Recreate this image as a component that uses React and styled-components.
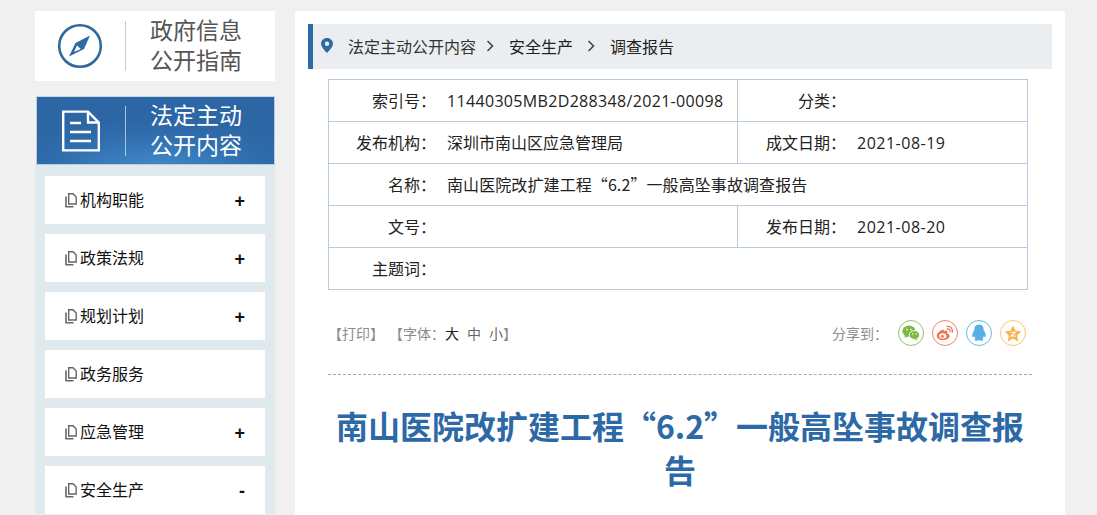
import React from 'react'
import styled, { createGlobalStyle } from 'styled-components'

const Global = createGlobalStyle`
  html, body { margin: 0; padding: 0; background: #f0f0f0; height: 515px; overflow: hidden; }
  body { font-family: "Open Sans", "Noto Sans CJK SC", sans-serif; }
  * { box-sizing: border-box; }
`

const Page = styled.div`
  display: flex;
  gap: 20px;
  width: 1097px;
  height: 515px;
  padding: 11px 0 0 35px;
  overflow: hidden;
`
const Side = styled.div`
  width: 240px;
  flex: none;
`
const GuideCard = styled.div`
  height: 70px;
  background: #fff;
  display: flex;
  align-items: center;
`
const IconSlot = styled.div`
  width: 91px;
  height: 50px;
  display: flex;
  align-items: center;
  justify-content: center;
  border-right: 1px solid ${p => p.$line};
`
const BigLabel = styled.div`
  margin: 0 0 2px 24px;
  font-size: 23px;
  line-height: 30px;
  color: ${p => p.$color};
`
const SideHead = styled.div`
  height: 69px;
  margin: 15px 0 0 1px;
  background: radial-gradient(ellipse 150px 45px at 50% 100%, #3f86c8 0%, #2f6cab 70%, #2c66a5 100%);
  border: 1px solid #b9cfdf;
  border-top-color: #c5d6e3;
  display: flex;
  align-items: center;
`
const HeadSlot = styled(IconSlot)`
  width: 89px;
`
const Menu = styled.div`
  padding: 11px 10px 0;
  background: #dfe9ee;
  display: flex;
  flex-direction: column;
  gap: 10px;
`
const MenuItem = styled.div`
  height: 48px;
  flex: none;
  background: #fff;
  display: flex;
  align-items: center;
  padding: 0 20px 2px;
  font-size: 16px;
  color: #111;
`
const MenuText = styled.span`
  margin-left: 3px;
  flex: 1;
`
const Mark = styled.span`
  margin-top: 4px;
  font-size: 18px;
  font-weight: 700;
  color: #111;
  font-family: "Liberation Sans", sans-serif;
`
const SmallDocIcon = styled.svg`
  width: 12px;
  height: 15px;
  margin-top: 2px;
  flex: none;
`
const Main = styled.div`
  width: 770px;
  height: 504px;
  flex: none;
  background: #fff;
  padding: 13px 13px 0;
`
const Crumbs = styled.div`
  height: 45px;
  background: #ebeef1;
  border-left: 5px solid #2b6ca6;
  display: flex;
  align-items: center;
  padding: 0 0 2px 8px;
  font-size: 16px;
  color: #333;
`
const CrumbText = styled.span`
  margin-left: ${p => p.$gap}px;
  color: ${p => p.$color || '#333'};
`
const Chevron = styled.svg`
  margin-left: ${p => p.$gap}px;
  width: 8px;
  height: 12px;
`
const InfoTable = styled.div`
  margin: 10px 0 0 20px;
  width: 700px;
  border: 1px solid #b7cbdd;
  border-bottom: 0;
`
const Row = styled.div`
  height: 42px;
  display: flex;
  border-bottom: 1px solid #b7cbdd;
  font-size: 16px;
  color: #222;
`
const Label = styled.div`
  width: ${p => p.$w}px;
  flex: none;
  text-align: right;
  line-height: 42px;
`
const Value = styled.div`
  flex: ${p => (p.$w ? 'none' : 1)};
  width: ${p => (p.$w ? p.$w + 'px' : 'auto')};
  padding-left: 11px;
  line-height: 42px;
  white-space: nowrap;
  border-right: ${p => (p.$w ? '1px solid #b7cbdd' : '0')};
`
const TitleValue = styled(Value)`
  font-family: "Noto Sans CJK SC", sans-serif;
  letter-spacing: 0.09px;
  line-height: 41px;
`
const Digits = styled.span`
  letter-spacing: ${p => p.$track}px;
`
const Tools = styled.div`
  margin: 28px 0 0 20px;
  width: 698px;
  height: 30px;
  display: flex;
  align-items: center;
  font-size: 14px;
  color: #8c8c8c;
`
const FontSize = styled.span`
  color: ${p => p.$color};
  margin-left: ${p => p.$gap}px;
`
const ShareLabel = styled.span`
  margin-left: auto;
  margin-right: 10px;
`
const ShareList = styled.div`
  display: flex;
  gap: 8px;
`
const ShareIcon = styled.div`
  width: 26px;
  height: 26px;
  border-radius: 50%;
  border: 1px solid ${p => p.$color};
  display: flex;
  align-items: center;
  justify-content: center;
`
const Divider = styled.div`
  margin: 26px 0 0 20px;
  width: 704px;
  border-top: 1px dashed #aaa;
`
const Title = styled.h1`
  margin: 28px 0 0 20px;
  width: 704px;
  text-align: center;
  font-family: "Noto Sans CJK SC", sans-serif;
  font-size: 32px;
  line-height: 44px;
  font-weight: 700;
  color: #2d69a6;
`

const Compass = () => (
  <svg width="46" height="46" viewBox="0 0 46 46">
    <circle cx="23" cy="23" r="20.8" fill="none" stroke="#2f6a9f" strokeWidth="2.6" />
    <path d="M33 12.5 L18.5 20 L12 33.5 L27 26 Z" fill="#2f6a9f" />
    <path d="M20 22.4 L23.8 26 L17 29 Z" fill="#fff" />
  </svg>
)

const DocBig = () => (
  <svg width="38" height="42" viewBox="0 0 38 42" fill="none" stroke="#fff" strokeWidth="2.4">
    <path d="M1.2 1.6 H26 L36.8 12.5 V40.4 H1.2 Z" />
    <path d="M26 1.6 V12.5 H36.8" />
    <path d="M8 13 H19 M8 22 H29 M8 31 H29" />
  </svg>
)

const DocSmall = () => (
  <SmallDocIcon viewBox="0 0 12 15" fill="none" stroke="#666" strokeWidth="1.4">
    <path d="M3.7 0.8 H8 L11.2 4 V11 H3.7 Z" />
    <path d="M1 3.5 V13.7 H8.5" strokeWidth="1.6" />
  </SmallDocIcon>
)

const Pin = () => (
  <svg width="12" height="15" viewBox="0 0 12 15">
    <path fillRule="evenodd" fill="#2f6a9f" d="M6 0 C2.6 0 0 2.6 0 5.8 C0 9.6 6 15 6 15 C6 15 12 9.6 12 5.8 C12 2.6 9.4 0 6 0 Z M6 3.6 A2.2 2.2 0 1 1 6 8 A2.2 2.2 0 1 1 6 3.6 Z" />
  </svg>
)

const Arrow = ({ gap }) => (
  <Chevron $gap={gap} viewBox="0 0 8 12">
    <path d="M1.5 1 L6.5 6 L1.5 11" fill="none" stroke="#444" strokeWidth="1.6" />
  </Chevron>
)

const Wechat = () => (
  <svg width="18" height="16" viewBox="0 0 18 16">
    <ellipse cx="7" cy="6.2" rx="6.6" ry="5.6" fill="#7cbb3f" />
    <path d="M3 10 L2.6 13 L6 11 Z" fill="#7cbb3f" />
    <ellipse cx="12.4" cy="10" rx="5.2" ry="4.4" fill="#7cbb3f" stroke="#fff" strokeWidth="0.9" />
    <path d="M14.6 13.4 L15.4 15.6 L12.6 14 Z" fill="#7cbb3f" />
    <circle cx="5" cy="4.6" r="0.8" fill="#fff" />
    <circle cx="9" cy="4.6" r="0.8" fill="#fff" />
    <circle cx="10.6" cy="9" r="0.7" fill="#fff" />
    <circle cx="14.2" cy="9" r="0.7" fill="#fff" />
  </svg>
)

const Weibo = () => (
  <svg width="18" height="16" viewBox="0 0 18 16">
    <path d="M7.5 4.6 C3.6 5.6 0.6 8.6 0.8 11 C1 13.8 4.4 15.4 7.8 15 C11.4 14.6 14 12.6 13.6 10.4 C13.3 9 11.8 8.6 11.2 8.4 C11.8 7 11.6 5.8 10.2 5.6 C9.4 5.5 8.4 5.9 7.6 6.4 C8 5.4 8.2 4.4 7.5 4.6 Z" fill="#f2734f" />
    <ellipse cx="6.8" cy="11" rx="3.6" ry="2.7" fill="#fff" />
    <circle cx="6.4" cy="11.2" r="1.5" fill="#f2734f" />
    <path d="M11 1.6 C14 0.8 17.2 3.4 16.2 7 M11.4 4 C13 3.6 14.6 4.8 14 6.6" fill="none" stroke="#f2734f" strokeWidth="1.3" strokeLinecap="round" />
  </svg>
)

const Penguin = () => (
  <svg width="16" height="18" viewBox="0 0 16 18">
    <path d="M8 0.5 C4.4 0.5 3.4 3.4 3.4 6 C2 8 0.8 10.6 1.4 13 C2 13.6 2.8 12.6 3.2 12 C3.4 13.2 3.8 14 4.4 14.8 C3.4 15.4 3.2 16.6 5 16.8 C6 16.9 7.2 16.4 8 16 C8.8 16.4 10 16.9 11 16.8 C12.8 16.6 12.6 15.4 11.6 14.8 C12.2 14 12.6 13.2 12.8 12 C13.2 12.6 14 13.6 14.6 13 C15.2 10.6 14 8 12.6 6 C12.6 3.4 11.6 0.5 8 0.5 Z" fill="#55b0e8" />
  </svg>
)

const Star = () => (
  <svg width="18" height="17" viewBox="0 0 18 17">
    <path d="M9 0.6 L11.5 5.8 L17.4 6.6 L13.2 10.6 L14.2 16.4 L9 13.6 L3.8 16.4 L4.8 10.6 L0.6 6.6 L6.5 5.8 Z" fill="#f9b24b" />
    <path d="M6.4 7.2 H11.4 L7 11 H11.8" fill="none" stroke="#fff" strokeWidth="1.1" />
  </svg>
)

const menu = [
  ['机构职能', '+'],
  ['政策法规', '+'],
  ['规划计划', '+'],
  ['政务服务', ''],
  ['应急管理', '+'],
  ['安全生产', '-'],
]

export default function App() {
  return (
    <>
      <Global />
      <Page>
        <Side>
          <GuideCard>
            <IconSlot $line="#ccc"><Compass /></IconSlot>
            <BigLabel $color="#555">政府信息<br />公开指南</BigLabel>
          </GuideCard>
          <SideHead>
            <HeadSlot $line="#a9c4df"><DocBig /></HeadSlot>
            <BigLabel $color="#fff">法定主动<br />公开内容</BigLabel>
          </SideHead>
          <Menu>
            {menu.map(([name, mark]) => (
              <MenuItem key={name}>
                <DocSmall />
                <MenuText>{name}</MenuText>
                <Mark>{mark}</Mark>
              </MenuItem>
            ))}
          </Menu>
        </Side>
        <Main>
          <Crumbs>
            <Pin />
            <CrumbText $gap={15}>法定主动公开内容</CrumbText>
            <Arrow gap={10} />
            <CrumbText $gap={15} $color="#222">安全生产</CrumbText>
            <Arrow gap={14} />
            <CrumbText $gap={15} $color="#222">调查报告</CrumbText>
          </Crumbs>
          <InfoTable>
            <Row>
              <Label $w={107}>索引号：</Label>
              <Value $w={302}><Digits $track={0.33}>11440305MB2D288348/2021-00098</Digits></Value>
              <Label $w={108}>分类：</Label>
              <Value />
            </Row>
            <Row>
              <Label $w={107}>发布机构：</Label>
              <Value $w={302}>深圳市南山区应急管理局</Value>
              <Label $w={108}>成文日期：</Label>
              <Value><Digits $track={0.5}>2021-08-19</Digits></Value>
            </Row>
            <Row>
              <Label $w={107}>名称：</Label>
              <TitleValue>南山医院改扩建工程“6.2”一般高坠事故调查报告</TitleValue>
            </Row>
            <Row>
              <Label $w={107}>文号：</Label>
              <Value $w={302} />
              <Label $w={108}>发布日期：</Label>
              <Value><Digits $track={0.5}>2021-08-20</Digits></Value>
            </Row>
            <Row>
              <Label $w={107}>主题词：</Label>
              <Value />
            </Row>
          </InfoTable>
          <Tools>
            <span>【打印】</span>
            <FontSize $gap={5} $color="#8c8c8c">【字体：</FontSize>
            <FontSize $gap={0} $color="#222">大</FontSize>
            <FontSize $gap={8} $color="#666">中</FontSize>
            <FontSize $gap={8} $color="#666">小</FontSize>
            <FontSize $gap={0} $color="#8c8c8c">】</FontSize>
            <ShareLabel>分享到：</ShareLabel>
            <ShareList>
              <ShareIcon $color="#8cc665"><Wechat /></ShareIcon>
              <ShareIcon $color="#f5825f"><Weibo /></ShareIcon>
              <ShareIcon $color="#66b8ec"><Penguin /></ShareIcon>
              <ShareIcon $color="#fbc768"><Star /></ShareIcon>
            </ShareList>
          </Tools>
          <Divider />
          <Title>南山医院改扩建工程“6.2”一般高坠事故调查报告</Title>
        </Main>
      </Page>
    </>
  )
}
